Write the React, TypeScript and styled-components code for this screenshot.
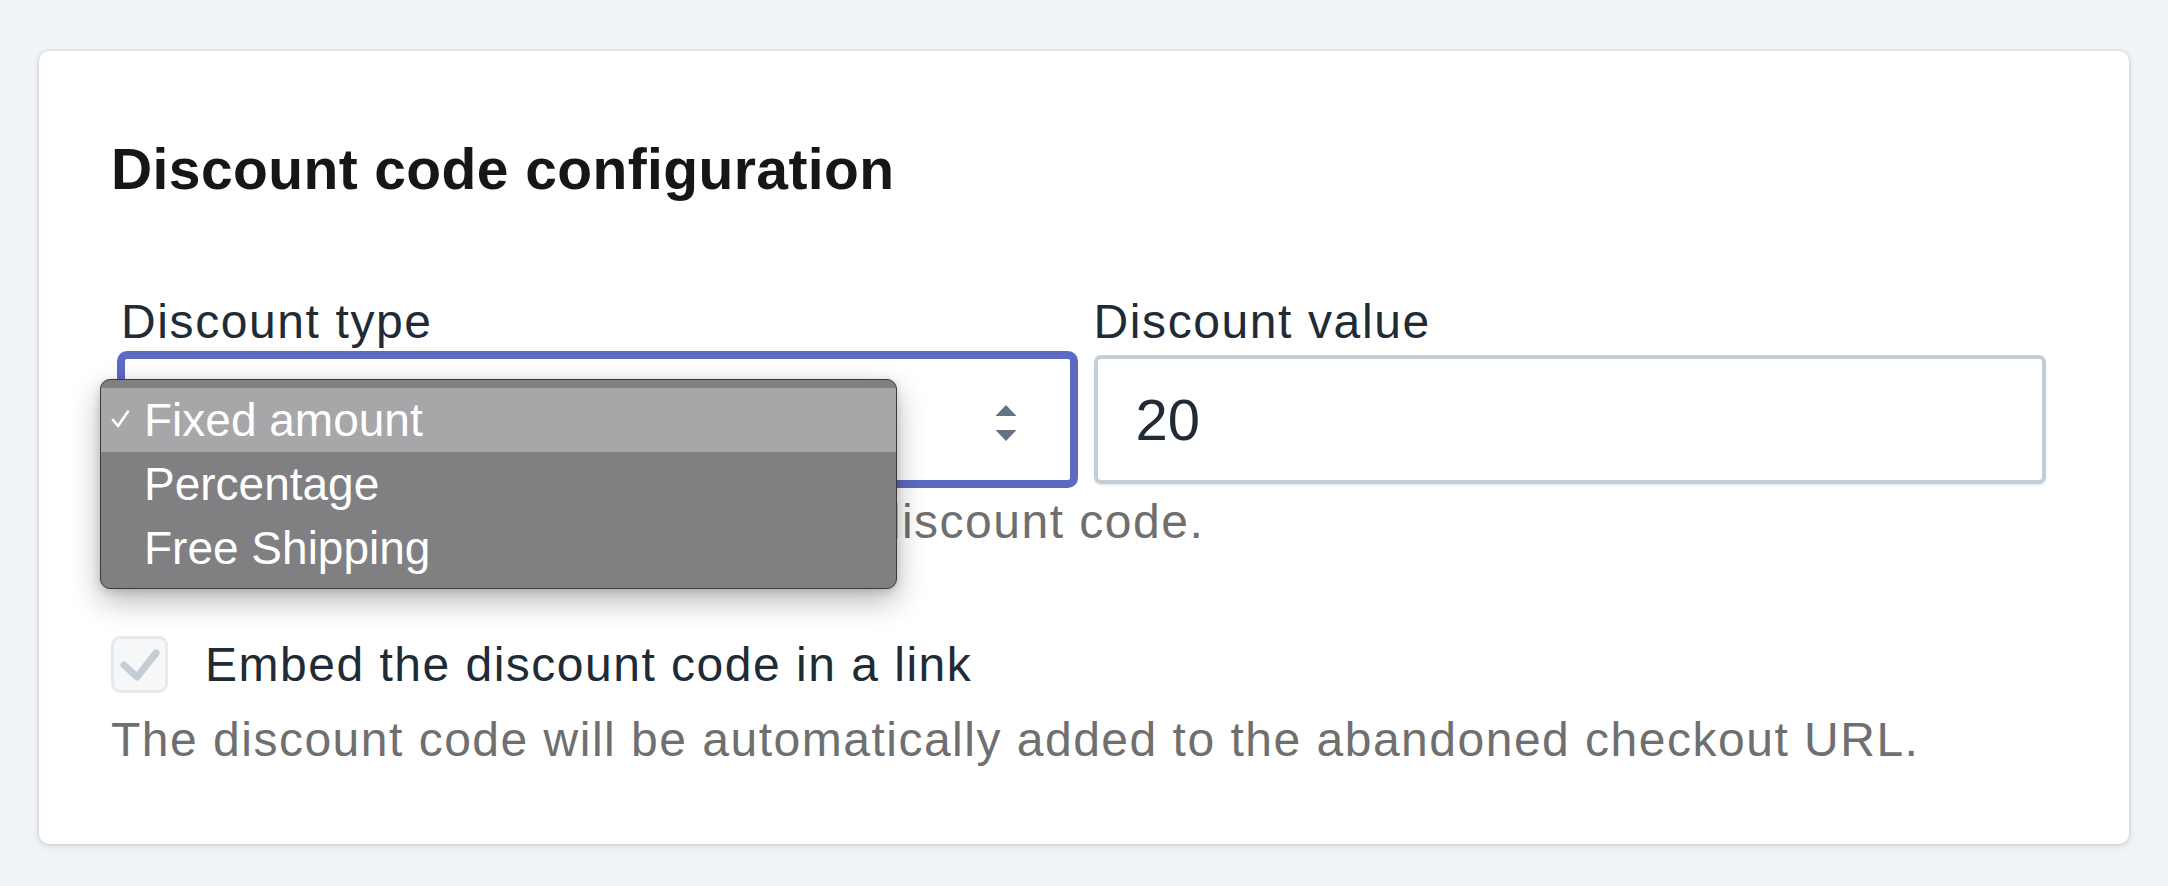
import React from "react";
import styled, { createGlobalStyle } from "styled-components";

const GlobalStyle = createGlobalStyle`
  html, body {
    margin: 0;
    padding: 0;
    background: #f1f4f7;
    font-family: "Liberation Sans", Arial, sans-serif;
  }
`;

const Page = styled.div`
  padding: 51px 39px 40px 39px;
`;

const Card = styled.section`
  background: #fff;
  border-radius: 10px;
  box-shadow: 0 0 0 2px rgba(63, 63, 68, 0.05), 0 2px 6px rgba(63, 63, 68, 0.15);
  padding: 84px 83px 77px 72px;
  height: 793px;
  box-sizing: border-box;
`;

const Title = styled.h2`
  margin: 0 0 91px;
  font-size: 57px;
  line-height: 68px;
  font-weight: 700;
  color: #161616;
  letter-spacing: 0.4px;
`;

const FieldRow = styled.div`
  display: grid;
  grid-template-columns: minmax(0, 1fr) minmax(0, 1fr);
  column-gap: 20px;
  margin-left: 10px;
`;

const Field = styled.div`
  position: relative;
  display: flex;
  flex-direction: column;
  min-width: 0;
`;

const Label = styled.label`
  font-size: 48px;
  line-height: 56px;
  letter-spacing: 1.6px;
  color: #212b36;
  margin-bottom: 5px;
`;

const SelectBox = styled.div`
  position: relative;
  height: 129px;
  box-sizing: border-box;
  border: 4px solid #5c6ac4;
  box-shadow: 0 0 0 4px #5c6ac4;
  border-radius: 6px;
  background: #fff;
`;

const Arrows = styled.svg`
  position: absolute;
  right: 53px;
  top: 46px;
`;

const InputBox = styled.div`
  height: 129px;
  box-sizing: border-box;
  border: 4px solid #c4cdd5;
  border-radius: 7px;
  box-shadow: 0 2px 2px rgba(99, 115, 129, 0.12);
  display: flex;
  align-items: center;
  padding-left: 38px;
  font-size: 58px;
  color: #212b36;
`;

const Help = styled.p<{ $tight?: boolean }>`
  margin: ${(p) => (p.$tight ? "10px 0 0" : "19px 0 0")};
  font-size: 48px;
  line-height: 56px;
  letter-spacing: 1.5px;
  color: #6f6f6f;
  white-space: nowrap;
`;

const Menu = styled.ul`
  position: absolute;
  left: -21px;
  top: 85px;
  width: 797px;
  margin: 0;
  padding: 8px 0;
  list-style: none;
  box-sizing: border-box;
  background: #808083;
  border: 1.5px solid #3b3b3d;
  border-radius: 10px;
  box-shadow: 0 12px 30px rgba(0, 0, 0, 0.28), 0 2px 8px rgba(0, 0, 0, 0.15);
  overflow: hidden;
  z-index: 2;
`;

const MenuItem = styled.li<{ $active?: boolean }>`
  position: relative;
  height: 64px;
  display: flex;
  align-items: center;
  padding-left: 43px;
  font-size: 46px;
  color: #fff;
  background: ${(p) => (p.$active ? "#a7a7a9" : "transparent")};
`;

const Tick = styled.svg`
  position: absolute;
  left: 10px;
  top: 22px;
`;

const CheckRow = styled.div`
  display: flex;
  align-items: center;
  gap: 37px;
  margin-top: 86px;
`;

const CheckBox = styled.span`
  width: 57px;
  height: 57px;
  box-sizing: border-box;
  border: 3px solid #e6e9ed;
  border-radius: 9px;
  background: #f6f7f9;
  display: flex;
  align-items: center;
  justify-content: center;
  flex: none;
`;

const CheckLabel = styled.span`
  font-size: 48px;
  line-height: 56px;
  letter-spacing: 1.5px;
  color: #212b36;
`;

export default function App() {
  return (
    <>
      <GlobalStyle />
      <Page>
        <Card>
          <Title>Discount code configuration</Title>
          <FieldRow>
            <Field>
              <Label>Discount type</Label>
              <SelectBox>
                <Arrows width="22" height="37" viewBox="0 0 22 37">
                  <path d="M11 0 L21.5 11 L0.5 11 Z" fill="#637381" />
                  <path d="M0.5 25 L21.5 25 L11 36 Z" fill="#637381" />
                </Arrows>
              </SelectBox>
              <Help $tight>Choose the type of value for this discount code.</Help>
              <Menu>
                <MenuItem $active>
                  <Tick width="19" height="18" viewBox="0 0 19 18">
                    <path d="M2 10 L7 16 L17 1.5" stroke="#fff" strokeWidth="2.6" fill="none" strokeLinecap="round" strokeLinejoin="round" />
                  </Tick>
                  Fixed amount
                </MenuItem>
                <MenuItem>Percentage</MenuItem>
                <MenuItem>Free Shipping</MenuItem>
              </Menu>
            </Field>
            <Field>
              <Label>Discount value</Label>
              <InputBox>20</InputBox>
            </Field>
          </FieldRow>
          <CheckRow>
            <CheckBox>
              <svg width="42" height="34" viewBox="0 0 42 34">
                <path d="M5 17 L18 29 L37 5" stroke="#c4cdd5" strokeWidth="7" fill="none" strokeLinecap="round" strokeLinejoin="round" />
              </svg>
            </CheckBox>
            <CheckLabel>Embed the discount code in a link</CheckLabel>
          </CheckRow>
          <Help>The discount code will be automatically added to the abandoned checkout URL.</Help>
        </Card>
      </Page>
    </>
  );
}
